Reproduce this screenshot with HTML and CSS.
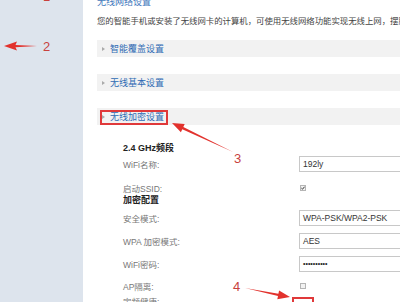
FILE: index.html
```html
<!DOCTYPE html>
<html lang="zh-CN">
<head>
    <meta charset="UTF-8">
    <title>无线网络设置</title>
    <link rel="stylesheet" href="styles.css">
</head>
<body>
    <div class="page">
        <div class="sidebar"></div>

        <div class="main">
            <div class="title">无线网络设置</div>
            <div class="desc">您的智能手机或安装了无线网卡的计算机，可使用无线网络功能实现无线上网，摆脱网线的束缚。</div>

            <div class="section-bar first"><span class="caret"></span>智能覆盖设置</div>
            <div class="section-bar"><span class="caret"></span>无线基本设置</div>
            <div class="section-bar"><span class="caret"></span>无线加密设置</div>

            <div class="form">
                <div class="group-title first">2.4 GHz频段</div>
                <div class="row field gap-xxs">
                    <label>WiFi名称:</label>
                    <div class="input">192ly</div>
                </div>
                <div class="row small">
                    <label>启动SSID:</label>
                    <span class="check checked">
                        <svg width="4" height="4" viewBox="0 0 4 4"><path d="M0.4 2.1 L1.5 3.2 L3.6 0.7" fill="none" stroke="#333" stroke-width="1"/></svg>
                    </span>
                </div>
                <div class="group-title">加密配置</div>
                <div class="row field gap-s">
                    <label>安全模式:</label>
                    <div class="input">WPA-PSK/WPA2-PSK</div>
                </div>
                <div class="row field">
                    <label>WPA 加密模式:</label>
                    <div class="input">AES</div>
                </div>
                <div class="row field">
                    <label>WiFi密码:</label>
                    <div class="input dots">••••••••••</div>
                </div>
                <div class="row small gap-m">
                    <label>AP隔离:</label>
                    <span class="check"></span>
                </div>
                <div class="row small gap-xs">
                    <label>定频健康:</label>
                </div>
            </div>
        </div>

        <!-- annotations drawn over the screenshot -->
        <span class="mark mark-1">1</span>
        <span class="mark mark-2">2</span>
        <span class="mark mark-3">3</span>
        <span class="mark mark-4">4</span>
        <div class="red-box box-3"></div>
        <div class="red-box box-4"></div>
        <svg class="arrows" width="400" height="302" viewBox="0 0 400 302">
            <polygon points="4,46 17,41.5 15.5,45 37,46 15.5,47.2 17,50.5" fill="#e2322d"/>
            <polygon points="172,123 184.7,124 183.3,127 233,152 182.3,129.2 180.9,132.2" fill="#e2322d"/>
            <polygon points="290,297 279.1,290.4 278.4,293.7 245,288 278,295.9 277.3,299.2" fill="#e2322d"/>
        </svg>
    </div>
</body>
</html>
```

FILE: styles.css
```css
* {
    margin: 0;
    padding: 0;
    box-sizing: border-box;
}

body {
    font-family: 'Liberation Sans', 'Noto Sans CJK SC', sans-serif;
    background: white;
    width: 400px;
    height: 302px;
    overflow: hidden;
}

.page {
    position: relative;
    display: flex;
    height: 302px;
    overflow: hidden;
}

.sidebar {
    width: 83px;
    flex-shrink: 0;
    background: #dde4ed;
}

.main {
    flex: 1;
    min-width: 0;
    padding-left: 14px;
    overflow: hidden;
}

.title {
    margin-top: -3px;
    height: 11px;
    line-height: 11px;
    font-size: 9px;
    color: #4479bd;
    white-space: nowrap;
}

.desc {
    margin-top: 8px;
    height: 11px;
    line-height: 11px;
    font-size: 8.4px;
    color: #444;
    white-space: nowrap;
}

.section-bar {
    display: flex;
    align-items: center;
    height: 17px;
    margin-top: 17px;
    padding-left: 5px;
    background: #f2f2f2;
    font-size: 9px;
    color: #2f6bb4;
    white-space: nowrap;
}

.section-bar.first {
    margin-top: 13px;
}

.caret {
    width: 0;
    height: 0;
    margin-right: 5px;
    border-left: 3px solid #aaa;
    border-top: 2px solid transparent;
    border-bottom: 2px solid transparent;
}

.form {
    padding-left: 26px;
}

.group-title {
    height: 12px;
    line-height: 12px;
    font-size: 9px;
    font-weight: bold;
    color: #222;
}

.group-title.first {
    margin-top: 17px;
}

.row {
    display: grid;
    grid-template-columns: 176px 120px;
    align-items: center;
    margin-top: 7px;
}

.row label {
    font-size: 8.5px;
    color: #777;
    white-space: nowrap;
}

.row.field {
    height: 16px;
}

.row.small {
    height: 12px;
    margin-top: 10px;
}

.row.gap-xxs {
    margin-top: 2px;
}

.row.gap-s {
    margin-top: 4px;
}

.row.gap-m {
    margin-top: 8px;
}

.row.gap-xs {
    margin-top: 3px;
}

.input {
    height: 16px;
    line-height: 14px;
    padding-left: 3px;
    border: 1px solid #c8c8c8;
    background: white;
    font-size: 8.5px;
    color: #333;
    white-space: nowrap;
}

.input.dots {
    font-size: 7px;
    color: #222;
}

.check {
    display: flex;
    align-items: center;
    justify-content: center;
    width: 6px;
    height: 6px;
    margin-left: 1px;
    border: 1px solid #b5b5b5;
    background: #f2f2f2;
}

.mark {
    position: absolute;
    font-family: 'Liberation Sans', sans-serif;
    font-size: 13px;
    line-height: 13px;
    color: #c8413d;
}

.mark-1 { left: 43px; top: -10.5px; }
.mark-2 { left: 43px; top: 40px; }
.mark-3 { left: 234px; top: 152px; }
.mark-4 { left: 233px; top: 280px; }

.red-box {
    position: absolute;
    border: 2px solid #e0393a;
}

.box-3 {
    left: 100px;
    top: 110px;
    width: 68px;
    height: 15px;
}

.box-4 {
    left: 292px;
    top: 297px;
    width: 22px;
    height: 12px;
}

.arrows {
    position: absolute;
    left: 0;
    top: 0;
    pointer-events: none;
}
```
